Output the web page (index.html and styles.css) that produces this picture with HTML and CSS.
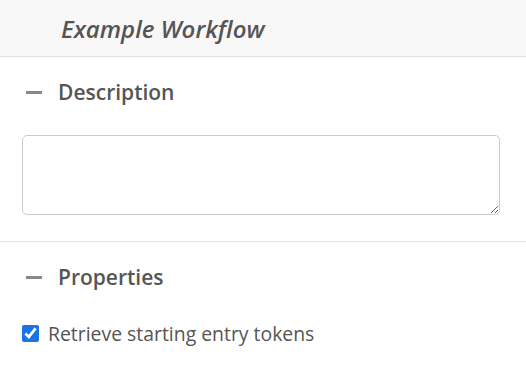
FILE: index.html
```html
<!DOCTYPE html>
<html lang="en">
<head>
  <meta charset="UTF-8" />
  <title>Example Workflow</title>
  <link rel="stylesheet" href="styles.css">
</head>
<body>
  <div class="header">
    <h2 class="title">Example Workflow</h2>
  </div>
  <div class="section">
    <div class="section-head">
      <span class="toggle"></span>
      <span class="section-title">Description</span>
    </div>
    <textarea class="desc"></textarea>
  </div>
  <div class="section last">
    <div class="section-head">
      <span class="toggle"></span>
      <span class="section-title">Properties</span>
    </div>
    <label class="check">
      <input type="checkbox" checked />
      Retrieve starting entry tokens
    </label>
  </div>
</body>
</html>
```

FILE: styles.css
```css
* {
  box-sizing: border-box;
}
body {
  margin: 0;
  background: #fff;
  font-family: 'Open Sans', sans-serif;
  color: #555;
}
.header {
  background: #f8f8f8;
  border-bottom: 1px solid #e0e0e0;
  height: 57px;
  padding-left: 61px;
  display: flex;
  align-items: center;
}
.title {
  margin: 0;
  font-size: 24px;
  font-style: italic;
  font-weight: 600;
  color: #555;
}
.section {
  border-bottom: 1px solid #e4e4e4;
  padding: 18px 26px 26px 22px;
}
.section.last {
  border-bottom: none;
}
.section-head {
  display: flex;
  align-items: center;
  height: 34px;
  margin-bottom: 26px;
}
.toggle {
  display: inline-block;
  width: 16px;
  height: 3px;
  background: #888;
  margin-left: 4px;
  margin-right: 16px;
}
.section-title {
  font-size: 21px;
  font-weight: 600;
  color: #555;
}
.desc {
  display: block;
  width: 100%;
  height: 80px;
  border: 1px solid #ccc;
  border-radius: 5px;
  font-family: inherit;
  resize: vertical;
}
.check {
  display: flex;
  align-items: center;
  font-size: 19.4px;
  color: #555;
  margin-top: 4px;
}
.check input {
  width: 17px;
  height: 17px;
  margin: 0 9px 0 0;
  accent-color: #1a73e8;
}
```
